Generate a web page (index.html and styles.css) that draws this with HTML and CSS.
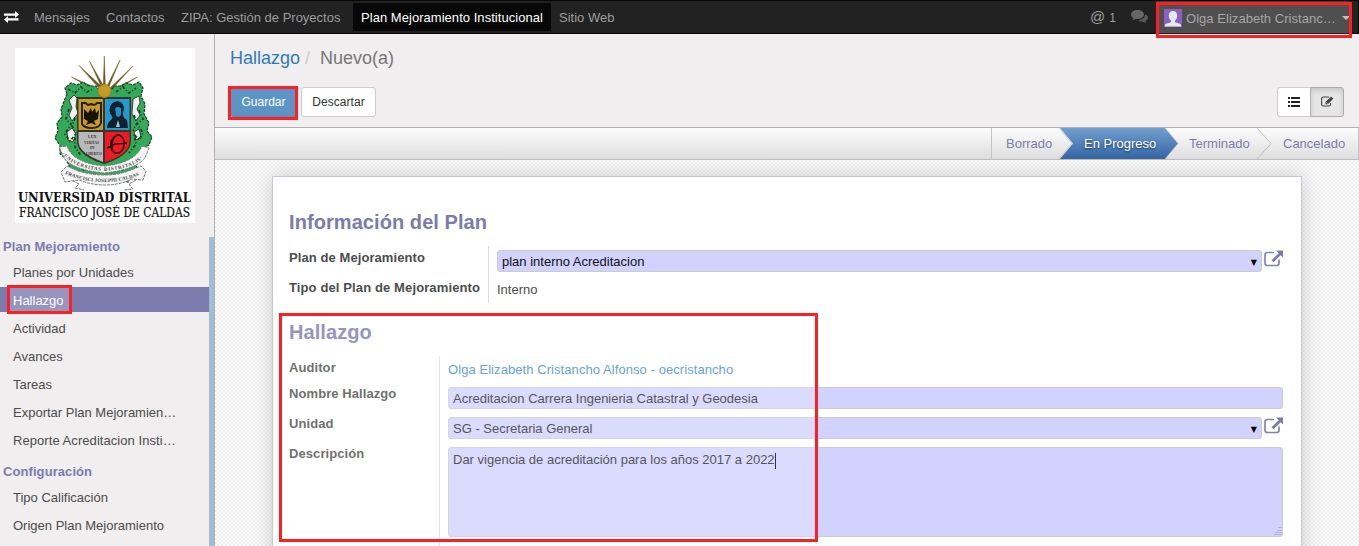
FILE: index.html
```html
<!DOCTYPE html>
<html lang="es">
<head>
<meta charset="utf-8">
<title>Hallazgo - Plan Mejoramiento Institucional</title>
<link rel="stylesheet" href="styles.css">
</head>
<body>
<nav class="topbar">
  <svg class="ic-swap" width="16" height="12" viewBox="0 0 16 12"><path d="M0 2.500h11V0l4 3.500L11 7V4.700H0zM14.500 9.500H4V12L0 8.500 4 5v2.300h10.500z" fill="#fff"/></svg>
  <a class="menu m1">Mensajes</a>
  <a class="menu m2">Contactos</a>
  <a class="menu m3">ZIPA: Gestión de Proyectos</a>
  <a class="menu m4 current">Plan Mejoramiento Institucional</a>
  <a class="menu m5">Sitio Web</a>
  <div class="tray">
    <span class="at">@</span><span class="count">1</span>
    <svg class="ic-chat" width="17" height="14" viewBox="0 0 17 14"><path d="M6.500 0C2.900 0 0 2 0 4.600c0 1.500 1 2.800 2.400 3.600-.2.800-.7 1.400-1.200 2 1.400-.2 2.500-.7 3.500-1.300l1.800.2C10.100 9.100 13 7.100 13 4.600S10.100 0 6.500 0z" fill="#666"/><path d="M14 4.500c0 3.300-3.100 5.500-6.800 5.700 1.100.9 2.800 1.400 4.600 1.200 1 .7 2.200 1.200 3.600 1.400-.5-.5-.9-1.100-1.100-1.900C15.800 10.100 17 8.900 17 7.500c0-1.300-1-2.500-3-3z" fill="#5c5c5c"/></svg>
    <div class="user">
      <svg width="18" height="18" viewBox="0 0 18 18"><rect width="18" height="18" fill="#7d50bb"/><path d="M9 2C6 2 4.700 4.200 4.800 7c.1 2 1 3.700 2.200 4.800v1.400L1.500 15c-.6.500-.5 2-.5 2.500h16c0-.5.1-2-.5-2.500L11 13.200v-1.400c1.200-1.100 2.100-2.800 2.200-4.800C13.300 4.200 12 2 9 2z" fill="#e3e8e8"/></svg>
      <span class="uname">Olga Elizabeth Cristanc…</span><i class="caret"></i>
    </div>
  </div>
</nav>
<div class="body">
  <aside class="side">
    <div class="logo">
      <svg width="180" height="175" viewBox="0 0 180 175">
        <g fill="#6a571e" stroke="#6a571e" stroke-width=".5"><path d="M56.500 29L82 44l1-3zM64 17.500L84 40l2-2zM74.500 13L86 38l2-1zM89.300 8l-1 29h2zM105 12L92 38l2 .5zM118 18L95 40l1.500 1.500zM122.500 29L97 42l1 2z"/></g>
        <path class="leaf" d="M52 46l-2-6 6-5 6 2 6-3 6 4 7 0 4 5 10 0 5-5 6 0 5-3 7 2 6-3 4 6-2 8 4 8-1 10 5 9-2 8 5 6-3 8-4 2-2 8-6 2-1 8 2 6-6 4-4 7-8-2-7 4-9-3-8 3-8-5-7 2-4-7-7-1-1-8-4-7-5-4 0-9-5-7 3-7-1-8 5-6-1-8z"/>
        <path d="M54 52l5-5 3 3-1 9 2 6-6 8-3-6 3-7zM118 51l6-3 1 7-3 6 3 6-4 6-4-7zM52 84l5-4 4 6-3 8-5-2zM119 84l5-3 2 8-5 3z" fill="#f0f0f0" stroke="#222" stroke-width=".8"/>
        <path class="vein" d="M53 41l7 4 6-6 6 5 6-3M101 44l7-5 6 6 7-5M54 61l-3 10 5 5-6 10 5 7 5-6 0 12 6 9M60 70l-3 8 4 7M124 62l4 9-6 5 6 9-4 7-5-6 2 10-7 9M119 67l3 8-4 8M60 116l9 6 10-4 10 6 9-5 10 3 8-7"/>
        <g class="ribbon"><path d="M44 99l8-1q6 17 37 20 31-3 38-20l7 2-4 10q-10 12-41 15-31-3-40-15z"/><path d="M46 124l6-6 11 5q13 4 27 4t26-5l10-4 5 5-3 9-11-1q-12 6-27 6-14 0-26-5l-14 2z"/><path d="M58 133l6 3-4 4 9 2M121 132l-7 4 4 5-9 1"/></g>
        <path id="r1" d="M47 106q12 15 42 17 32-2 42-17" fill="none"/>
        <path id="r2" d="M50 126q18 8 39 8t38-8" fill="none"/>
        <text class="motto"><textPath href="#r1" textLength="88">·UNIVERSITAS DISTRITALIS·</textPath></text>
        <text class="motto"><textPath href="#r2" textLength="76">FRANCISCI JOSEPHI CALDAS</textPath></text>
        <path d="M62 49h54v44c0 12-14 19-27 23-13-4-27-11-27-23z" fill="#3a3428"/>
        <path d="M63.500 51H88v31H63.500z" fill="#c39a2b"/><path d="M90 51h24.500v31H90z" fill="#2399cf"/>
        <path d="M63.500 84H88v30C75 109 63.500 103 63.500 93z" fill="#b9b9bb"/><path d="M90 84h24.500v9c0 11-12 17-24.500 21z" fill="#ed1c24"/>
        <path d="M67 55h4q1 3 5 1 4 2 6-1h4v20q-2 5-9 5-8 0-10-4z" fill="none" stroke="#28200a" stroke-width="2"/>
        <path d="M76 60l1 4 3-4 1 5 3-3-1 9-4 2 2 4-5-2-5 2 2-4-4-2 0-10 4 4z" fill="#171309"/>
        <path d="M97 71c1-1 0-2 0-3-3-3-3-8-1-11 3-5 10-5 12 0 2 3 0 6 0 9 0 3 1 4 4 6l1 8H92c0-4 2-7 5-9z" fill="#10202d"/><path d="M100 60q3-2 6 0l0 7q-3 4-5 0z" fill="#238fc1"/><path d="M103 72l-2 7h4z" fill="#a1c9da"/>
        <g class="tiny"><text x="73" y="90">LUX</text><text x="69" y="95.500" textLength="15" lengthAdjust="spacingAndGlyphs">VERITAS</text><text x="75" y="101">IN</text><text x="71" y="106.500" textLength="16" lengthAdjust="spacingAndGlyphs">LIBERTAS</text></g>
        <path d="M105 87c-6-1-8 6-8 11s2 8 6 7c5-1 7-8 6-12-1-5-6-8-10-4s-4 9-2 14M92 100l8-4 12-1" fill="none" stroke="#32080a" stroke-width="1.500"/>
        <circle cx="89.500" cy="43" r="6.500" fill="#c79a24" stroke="#a67d1e"/>
        <text class="uni" x="3" y="154" textLength="173" lengthAdjust="spacingAndGlyphs">UNIVERSIDAD DISTRITAL</text>
        <text class="fjc" x="4" y="169" textLength="171" lengthAdjust="spacingAndGlyphs">FRANCISCO JOSÉ DE CALDAS</text>
      </svg>
    </div>
    <div class="sidemenu">
      <div class="group">Plan Mejoramiento</div>
      <a>Planes por Unidades</a>
      <a class="active">Hallazgo</a>
      <a>Actividad</a>
      <a>Avances</a>
      <a>Tareas</a>
      <a>Exportar Plan Mejoramien…</a>
      <a class="rep">Reporte Acreditacion Insti…</a>
      <div class="group second">Configuración</div>
      <a>Tipo Calificación</a>
      <a>Origen Plan Mejoramiento</a>
    </div>
  </aside>
  <main class="main">
    <header class="cp">
      <div class="crumbs"><a>Hallazgo</a><i>/</i><span>Nuevo(a)</span></div>
      <div class="actions">
        <button class="btn primary">Guardar</button><button class="btn discard">Descartar</button>
        <div class="views">
          <span class="v"><svg width="12" height="10" viewBox="0 0 12 10"><path d="M0 0h2v2H0zM3 0h9v2H3zM0 4h2v2H0zM3 4h9v2H3zM0 8h2v2H0zM3 8h9v2H3z" fill="#222"/></svg></span>
          <span class="v on"><svg width="13" height="11" viewBox="0 0 13 11"><path d="M8 1H2.500Q.6 1 .6 2.800v5.400Q.6 10 2.500 10h5.300q1.800 0 1.800-1.800V7" fill="none" stroke="#444" stroke-width="1.100"/><path d="M4.500 6L10 .5 12.300 2.700 6.800 8.200H4.500z" fill="#444"/><path d="M5.500 6.500l1.200 1.200" stroke="#ddd" stroke-width=".8"/></svg></span>
        </div>
      </div>
    </header>
    <div class="status">
      <svg class="steps" width="368" height="31" viewBox="0 0 368 31">
        <defs><linearGradient id="b" x2="0" y2="1"><stop stop-color="#729fcf"/><stop offset="1" stop-color="#3465a4"/></linearGradient></defs>
        <path d="M.5 0v31" stroke="#c4c4c8"/>
        <path d="M69 0h105l13 15.500L174 31H69l13-15.500z" fill="url(#b)"/>
        <path d="M68 0l13 15.500L68 31M174 0l13 15.500L174 31" fill="none" stroke="#bbb" stroke-opacity=".7"/>
        <path d="M266 0l14 15.500L266 31" fill="none" stroke="#c2c2c2"/>
        <path d="M367.500 0v31" stroke="#c4c4c8"/>
      </svg>
      <div class="steplabels"><span class="s1">Borrado</span><span class="s2">En Progreso</span><span class="s3">Terminado</span><span class="s4">Cancelado</span></div>
    </div>
    <div class="canvas">
      <section class="sheet">
        <h2>Información del Plan</h2>
        <div class="grid g1">
          <div class="labels"><label>Plan de Mejoramiento</label><label class="wide">Tipo del Plan de Mejoramiento</label></div>
          <div class="fields">
            <div class="row"><div class="input sel dark"><span>plan interno Acreditacion</span><i>▼</i></div><svg class="ext" width="19" height="17" viewBox="0 0 19 17"><path d="M10 2.500H3.500Q1 2.500 1 5v8q0 2.500 2.500 2.500h9Q15 15.500 15 13V9.500" fill="none" stroke="#8583b5" stroke-width="1.700"/><path d="M12 .5h7v7l-2.300-2.300-7.200 7-2-2 7.200-7z" fill="#7c7bad"/></svg></div>
            <div class="value">Interno</div>
          </div>
        </div>
        <h2 class="h-two">Hallazgo</h2>
        <div class="grid g2">
          <div class="labels"><label>Auditor</label><label>Nombre Hallazgo</label><label>Unidad</label><label>Descripción</label></div>
          <div class="fields">
            <a class="auditor">Olga Elizabeth Cristancho Alfonso - oecristancho</a>
            <div class="input full"><span>Acreditacion Carrera Ingenieria Catastral y Geodesia</span></div>
            <div class="row"><div class="input sel"><span>SG - Secretaria General</span><i>▼</i></div><svg class="ext" width="19" height="17" viewBox="0 0 19 17"><path d="M10 2.500H3.500Q1 2.500 1 5v8q0 2.500 2.500 2.500h9Q15 15.500 15 13V9.500" fill="none" stroke="#8583b5" stroke-width="1.700"/><path d="M12 .5h7v7l-2.300-2.300-7.200 7-2-2 7.200-7z" fill="#7c7bad"/></svg></div>
            <div class="area"><span>Dar vigencia de acreditación para los años 2017 a 2022</span><b class="cursor"></b><svg class="grip" width="8" height="8" viewBox="0 0 8 8"><path d="M4 .5h4M3 3.500h5M1 5.500h7M0 7.500h8" stroke="#aaaacc" stroke-width=".8"/></svg></div>
          </div>
        </div>
      </section>
    </div>
  </main>
</div>
<div class="mark mk-user"></div>
<div class="mark mk-save"></div>
<div class="mark mk-side"></div>
<div class="mark mk-form"></div>
</body>
</html>
```
FILE: styles.css
```css
* { box-sizing: border-box; }
body { margin: 0; width: 1359px; height: 546px; overflow: hidden; position: relative; background: #f0eeee; color: #4c4c4c; font: 13px/18px "Liberation Sans", Arial, sans-serif; }
.topbar { height: 34px; display: flex; align-items: center; background: #222; border: 1px solid #080808; border-width: 1px 1px 1px 0; padding-left: 4px; color: #9d9d9d; white-space: nowrap; }
.ic-swap { margin-right: 6px; }
.menu { height: 28px; line-height: 30px; padding: 0 8px; }
.m1 { width: 72px; }
.m2 { width: 75px; }
.m3 { width: 180px; }
.m4 { width: 198px; letter-spacing: .04px; }
.current { background: #080808; color: #fff; }
.tray { margin-left: auto; display: flex; align-items: center; height: 32px; }
.at { font-size: 15px; margin-right: 4px; padding-bottom: 1px; }
.count { font-size: 12px; margin-right: 15px; padding-top: 1px; }
.ic-chat { margin-right: 9px; }
.user { width: 193px; height: 32px; background: #3c3c3c; display: flex; align-items: center; padding: 2px 0 0 7px; margin-right: 8px; }
.user svg { flex: none; margin-bottom: 1px; }
.uname { margin-left: 4px; width: 156px; flex: none; padding-top: 1px; letter-spacing: .04px; }
.caret { border: 4px solid transparent; border-top-color: #bbb; border-bottom: 0; }
.body { display: flex; height: 512px; }
.side { width: 215px; border-right: 1px solid #afafb6; padding-top: 14px; }
.logo { width: 180px; height: 175px; margin: 0 0 14px 15px; background: #fff; }
.logo svg { display: block; overflow: visible; }
.leaf { fill: #35a95a; stroke: #17421f; stroke-width: 1.2; stroke-dasharray: 3 1; }
.vein { fill: none; stroke: #17421f; stroke-width: 1.8; stroke-dasharray: 3 2 1 2; }
.ribbon { fill: #f5f5f5; stroke: #777; stroke-width: 1; stroke-dasharray: 3 1; }
.motto { font: bold 5px "Liberation Serif", serif; fill: #444; }
.tiny { font: bold 4px/4px "Liberation Serif", serif; fill: #333; }
.uni { font: bold 13px "DejaVu Serif Condensed", "DejaVu Serif", serif; font-stretch: condensed; fill: #111; }
.fjc { font: 13px "DejaVu Serif Condensed", "DejaVu Serif", serif; font-stretch: condensed; fill: #111; stroke: #111; stroke-width: .2; }
.sidemenu { height: 309px; border-right: 5px solid #a3bcd6; display: flex; flex-direction: column; gap: 3px; overflow: hidden; white-space: nowrap; }
.group { font-weight: bold; color: #7c7bad; padding-left: 3px; height: 19px; line-height: 19px; letter-spacing: .08px; }
.second { margin-top: 7px; height: 19px; }
.sidemenu a { height: 25px; flex: none; line-height: 27px; padding-left: 13px; }
.sidemenu .rep { letter-spacing: .06px; }
.sidemenu .group { flex: none; }
.sidemenu .active { background: #7c7bad; color: #fff; }
.main { flex: 1; display: flex; flex-direction: column; }
.cp { height: 94px; border-bottom: 1px solid #afafb6; padding: 12px 15px 0 15px; }
.crumbs { font-size: 18px; line-height: 24px; color: #777; }
.crumbs a { color: #337ab7; }
.crumbs i { font-style: normal; color: #ccc; margin: 0 10px 0 5px; }
.actions { display: flex; margin-top: 17px; }
.btn { font: 12px/18px "Liberation Sans", Arial, sans-serif; height: 30px; padding: 0; border: 1px solid #ccc; border-radius: 3px; background: #fff; color: #333; }
.primary { width: 67px; background: #337ab7; border-color: #2e6da4; color: #fff; }
.discard { width: 75px; margin-left: 4px; letter-spacing: .06px; }
.views { margin-left: auto; display: flex; }
.v { width: 33px; height: 30px; border: 1px solid #ccc; border-right: 0; border-radius: 3px 0 0 3px; background: #fff; display: flex; align-items: center; justify-content: center; }
.on { width: 34px; border: 1px solid #adadad; border-radius: 0 3px 3px 0; background: #e6e6e6; box-shadow: inset 0 3px 5px rgba(0,0,0,.125); }
.on svg { margin-bottom: 2px; }
.status { height: 32px; border-bottom: 1px solid #bcbcc0; background: linear-gradient(#fcfcfc, #dedede); display: grid; justify-content: end; }
.steps, .steplabels { grid-area: 1 / 1; }
.steplabels { display: flex; line-height: 32px; color: #7c7bad; padding-left: 15px; z-index: 1; }
.s1 { width: 78px; }
.s2 { width: 105px; color: #fff; text-shadow: 0 1px 2px #234; }
.s3 { width: 94px; }
.canvas { flex: 1; padding: 16px 57px 0; background: repeating-conic-gradient(#ececec 0 25%, #fff 0 50%) 0 0 / 4px 4px; overflow: hidden; }
.sheet { width: 1030px; height: 400px; background: #fff; border: 1px solid #c8c8d3; box-shadow: 0 0 20px rgba(0,0,0,.18); padding: 32px 18px 0 16px; }
h2 { margin: 0 0 11px; font-size: 20px; line-height: 26px; color: #7c7bad; letter-spacing: .07px; }
.grid { display: flex; }
.labels { display: flex; flex-direction: column; font-weight: bold; border-right: 1px solid #ddd; white-space: nowrap; letter-spacing: .08px; }
.wide { letter-spacing: .12px; }
.fields { flex: 1; padding-left: 8px; }
.g1 { height: 57px; }
.g1 .labels { width: 200px; padding-top: 3px; gap: 12px; }
.g1 .fields { padding-top: 4px; }
.row { display: flex; }
.input { height: 22px; line-height: 22px; border: 1px solid #ccc; border-radius: 3px; background: #d2d2ff; color: #2b2b2b; padding: 0 4px; display: flex; }
.sel { flex: 1; justify-content: space-between; }
.sel i { font: 8px/23px "DejaVu Sans", sans-serif; color: #000; }
.dark { color: #111; }
.ext { margin: 0 0 0 2px; }
.value { margin-top: 9px; }
.h-two { margin: 16px 0 11px; }
.g2 { height: 190px; }
.g2 .labels { width: 151px; padding-top: 3px; gap: 12px; }
.g2 label:first-child { margin-bottom: -4px; }
.auditor { display: block; color: #428bca; padding-top: 5px; height: 31px; letter-spacing: .07px; }
.full { margin-bottom: 8px; }
.area { position: relative; margin-top: 8px; height: 90px; border: 1px solid #ccc; border-radius: 3px; background: #d2d2ff; color: #2b2b2b; padding: 3px 4px; }
.cursor { display: inline-block; width: 1px; height: 16px; background: #000; vertical-align: middle; }
.grip { position: absolute; right: 0; bottom: 1px; }
.mark { position: absolute; border: 3px solid #fc2024; background: rgba(255,255,255,.2); }
.mk-user { left: 1156px; top: 2px; width: 196px; height: 36px; background: rgba(255,255,255,.1); }
.mk-save { left: 228px; top: 86px; width: 70px; height: 34px; }
.mk-side { left: 7px; top: 285px; width: 65px; height: 29px; }
.mk-form { left: 279px; top: 313px; width: 539px; height: 229px; }
```
